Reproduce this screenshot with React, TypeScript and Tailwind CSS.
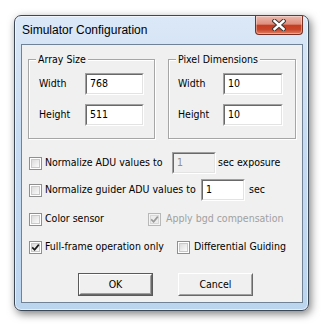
import React from "react";

function Sunken({
  value,
  width,
  disabled = false,
}: {
  value: string;
  width: string;
  disabled?: boolean;
}) {
  return (
    <div
      className={`${width} h-[22px] border border-t-[#a0a0a0] border-l-[#a0a0a0] border-b-white border-r-white shrink-0`}
    >
      <div
        className={`w-full h-full border border-t-[#696969] border-l-[#696969] border-b-[#e3e3e3] border-r-[#e3e3e3] flex items-center pl-[3px] ${
          disabled ? "bg-[#f0f0f0] text-[#8d8d8d]" : "bg-white text-black"
        }`}
      >
        {value}
      </div>
    </div>
  );
}

function Check({ checked = false, disabled = false }: { checked?: boolean; disabled?: boolean }) {
  return (
    <div
      className={`w-[13px] h-[13px] border shrink-0 p-[1px] ${
        disabled ? "border-[#b8b8b8] bg-[#f4f4f4]" : "border-[#8f8f8f] bg-white"
      }`}
    >
      <div
        className={`relative w-full h-full border ${
          disabled
            ? "border-[#d8d8d8] bg-[#ececec]"
            : "border-[#c9c9c9] bg-gradient-to-br from-[#dcdcdc] to-[#fbfbfb]"
        }`}
      >
        {checked && (
          <svg viewBox="0 0 9 9" className="absolute left-[-1px] top-[-1px] w-[9px] h-[9px]">
            <path
              d="M1.2 4.4 L3.6 6.8 L7.8 1.6"
              fill="none"
              stroke={disabled ? "#9a9a9a" : "#1a1a1a"}
              strokeWidth="1.7"
            />
          </svg>
        )}
      </div>
    </div>
  );
}

function Button({ label, isDefault = false }: { label: string; isDefault?: boolean }) {
  return (
    <div className={`w-[75px] h-[23px] shrink-0 ${isDefault ? "border border-[#5a5a5a]" : ""}`}>
      <div className="w-full h-full border border-t-white border-l-white border-b-[#696969] border-r-[#696969]">
        <div className="w-full h-full border border-t-[#f0f0f0] border-l-[#f0f0f0] border-b-[#a0a0a0] border-r-[#a0a0a0] bg-[#f0f0f0] flex items-center justify-center text-black">
          {label}
        </div>
      </div>
    </div>
  );
}

function Group({
  title,
  width,
  labelPad,
  labelCol,
  inputW,
  rows,
}: {
  title: string;
  width: string;
  labelPad: string;
  labelCol: string;
  inputW: string;
  rows: [string, string][];
}) {
  return (
    <div
      className={`relative ${width} h-[80px] border border-[#a6a6a6] shadow-[inset_1px_1px_0_#ffffff,1px_1px_0_#ffffff] ${labelPad} pt-[13px] flex flex-col gap-[9px] shrink-0`}
    >
      <span className="absolute left-[7px] top-[-8px] px-[2px] bg-[#f0f0f0] leading-[14px] text-black">
        {title}
      </span>
      {rows.map(([l, v]) => (
        <div key={l} className="flex items-center">
          <span className={`${labelCol} text-black`}>{l}</span>
          <Sunken value={v} width={inputW} />
        </div>
      ))}
    </div>
  );
}

export default function App() {
  return (
    <div className="w-[327px] h-[326px] bg-white pl-[14px] pt-[15px] overflow-hidden">
      <div className="w-[295px] h-[296px] rounded-[7px] border border-[#3d4856] bg-[linear-gradient(to_bottom,#dbe8f7_0%,#c8dcf2_40%,#bcd5ef_100%)] shadow-[2px_3px_9px_rgba(0,0,0,0.5),inset_0_0_0_1px_rgba(255,255,255,0.6)] flex flex-col pl-[6px] pr-[5px] pb-[7px]">
        <div className="h-[28px] flex items-start justify-between shrink-0">
          <span className="pl-[1px] pt-[7px] text-[12px] leading-[14px] text-black font-['Liberation_Sans',Arial,sans-serif]">
            Simulator Configuration
          </span>
          <div className="w-[48px] h-[19px] rounded-b-[4px] border border-t-0 border-[#7a2e21] bg-[linear-gradient(to_bottom,#edb9ad_0%,#dd8f7e_45%,#c53d22_52%,#c8462b_75%,#df8064_100%)] shadow-[inset_0_0_0_1px_rgba(255,255,255,0.35)] flex items-center justify-center">
            <svg viewBox="0 0 14 12" className="w-[14px] h-[12px]">
              <path d="M2.5 2 L11.5 10 M11.5 2 L2.5 10" stroke="#3a3a3a" strokeWidth="4.4" strokeLinecap="square" />
              <path d="M2.5 2 L11.5 10 M11.5 2 L2.5 10" stroke="#ffffff" strokeWidth="2.4" strokeLinecap="square" />
            </svg>
          </div>
        </div>
        <div className="flex-1 border border-[#6f8296] bg-[#f0f0f0] flex flex-col text-black text-[10.5px] font-['DejaVu_Sans_Condensed','Liberation_Sans',sans-serif] [font-stretch:condensed]">
          <div className="flex gap-[13px] pl-[6px] mt-[14px]">
            <Group
              title="Array Size"
              width="w-[127px]"
              labelPad="pl-[10px]"
              labelCol="w-[46px]"
              inputW="w-[59px]"
              rows={[
                ["Width", "768"],
                ["Height", "511"],
              ]}
            />
            <Group
              title="Pixel Dimensions"
              width="w-[128px]"
              labelPad="pl-[9px]"
              labelCol="w-[45px]"
              inputW="w-[60px]"
              rows={[
                ["Width", "10"],
                ["Height", "10"],
              ]}
            />
          </div>

          <div className="flex flex-col pl-[7px] mt-[13px]">
            <div className="h-[22px] flex items-center">
              <Check />
              <span className="ml-[3px] w-[127px] whitespace-nowrap">Normalize ADU values to</span>
              <Sunken value="1" width="w-[44px]" disabled />
              <span className="ml-[2px] whitespace-nowrap">sec exposure</span>
            </div>
            <div className="h-[22px] flex items-center mt-[5px]">
              <Check />
              <span className="ml-[3px] w-[156px] whitespace-nowrap">Normalize guider ADU values to</span>
              <Sunken value="1" width="w-[44px]" />
              <span className="ml-[4px]">sec</span>
            </div>
            <div className="h-[22px] flex items-center mt-[7px]">
              <Check />
              <span className="ml-[3px] w-[103px] whitespace-nowrap">Color sensor</span>
              <Check checked disabled />
              <span className="ml-[5px] text-[#a0a0a0] whitespace-nowrap">Apply bgd compensation</span>
            </div>
            <div className="h-[22px] flex items-center mt-[6px]">
              <Check checked />
              <span className="ml-[3px] w-[132px] whitespace-nowrap">Full-frame operation only</span>
              <Check />
              <span className="ml-[4px] whitespace-nowrap">Differential Guiding</span>
            </div>
          </div>

          <div className="flex pl-[56px] gap-[25px] mt-[15px]">
            <Button label="OK" isDefault />
            <Button label="Cancel" />
          </div>
        </div>
      </div>
    </div>
  );
}
